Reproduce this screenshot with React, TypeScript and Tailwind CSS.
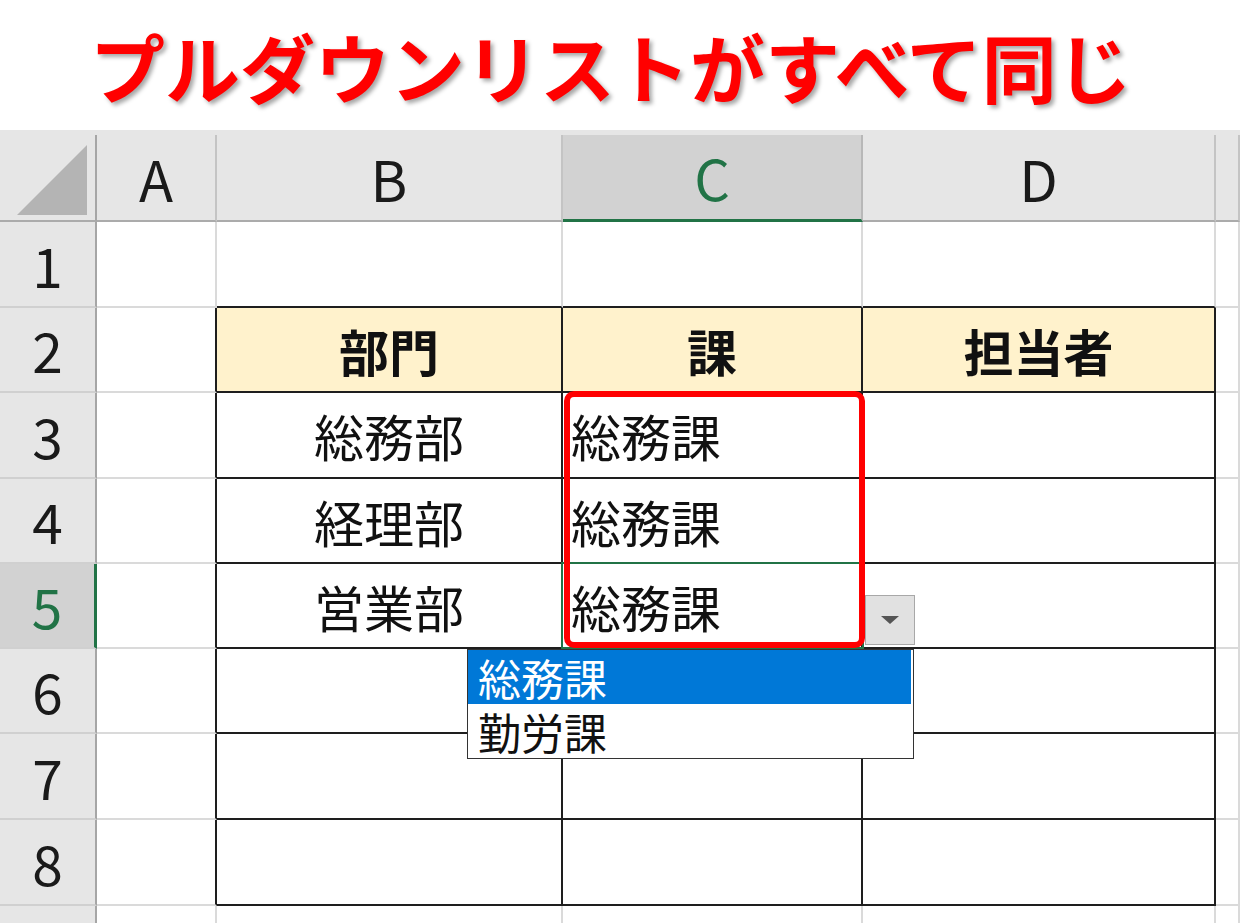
const colWidths = ['w-[120px]', 'w-[346px]', 'w-[300px]', 'w-[353px]', 'flex-1']
const colNames = ['A', 'B', 'C', 'D', 'E']
const rowHeights = ['h-[86px]', 'h-[85px]', 'h-[86px]', 'h-[85px]', 'h-[85px]', 'h-[85px]', 'h-[86px]', 'h-[86px]', 'h-[40px]']

type Cell = { text: string; bold?: boolean; align: 'center' | 'left' }

const data: Record<string, Cell> = {
  '2B': { text: '部門', bold: true, align: 'center' },
  '2C': { text: '課', bold: true, align: 'center' },
  '2D': { text: '担当者', bold: true, align: 'center' },
  '3B': { text: '総務部', align: 'center' },
  '3C': { text: '総務課', align: 'left' },
  '4B': { text: '経理部', align: 'center' },
  '4C': { text: '総務課', align: 'left' },
  '5B': { text: '営業部', align: 'center' },
  '5C': { text: '総務課', align: 'left' },
}

function cellClass(row: number, col: number) {
  const inTable = col >= 1 && col <= 3
  const rightBlack = row >= 2 && row <= 8 && col <= 3
  const bottomBlack = inTable && row >= 1 && row <= 8
  return [
    'border-r-2 border-b-2 flex items-center',
    rightBlack ? 'border-r-[#1e1e1e]' : 'border-r-[#dadada]',
    bottomBlack ? 'border-b-[#1e1e1e]' : 'border-b-[#dadada]',
    row === 2 && inTable ? 'bg-[#fff2cc]' : 'bg-white',
  ].join(' ')
}

function HeaderRow() {
  return (
    <div className="flex h-[92px] bg-[#e6e6e6]">
      <div className="w-[97px] mt-[5px] border-r-2 border-r-[#a6a6a6] border-b-2 border-b-[#ababab] flex items-end justify-end pr-[8px] pb-[5px]">
        <svg width="70" height="70" viewBox="0 0 70 70">
          <polygon points="0,70 70,0 70,70" fill="#b4b4b4" />
        </svg>
      </div>
      {colNames.map((name, i) => {
        const selected = name === 'C'
        return (
          <div
            key={name}
            className={`${colWidths[i]} mt-[5px] flex items-center justify-center text-[56px] leading-none ${
              selected
                ? 'bg-[#d2d2d2] border-r-2 border-r-[#b8b8b8] border-b-[3px] border-b-[#217346] text-[#217346]'
                : 'border-r-2 border-r-[#c4c4c4] border-b-2 border-b-[#ababab] text-[#1a1a1a]'
            }`}
          >
            {name !== 'E' && name}
          </div>
        )
      })}
    </div>
  )
}

function BodyRow({ row }: { row: number }) {
  const selected = row === 5
  return (
    <div className={`flex ${rowHeights[row - 1]}`}>
      <div
        className={`w-[97px] flex items-center justify-center text-[55px] leading-none border-b-2 border-b-[#d0d0d0] ${
          selected
            ? 'bg-[#d2d2d2] border-r-[3px] border-r-[#217346] text-[#217346]'
            : 'bg-[#e6e6e6] border-r-2 border-r-[#a6a6a6] text-[#1a1a1a]'
        }`}
      >
        {row < 9 && row}
      </div>
      {colNames.map((name, i) => {
        const cell = data[`${row}${name}`]
        return (
          <div key={name} className={`${colWidths[i]} ${cellClass(row, i)}`}>
            {cell && (
              <span
                className={`w-full text-[50px] leading-none text-[#111] ${
                  cell.bold ? 'font-bold' : 'font-normal'
                } ${cell.align === 'center' ? 'text-center' : 'text-left pl-[8px]'}`}
              >
                {cell.text}
              </span>
            )}
          </div>
        )
      })}
    </div>
  )
}

export default function App() {
  return (
    <div className="relative w-[1240px] h-[923px] overflow-hidden bg-white font-['Noto_Sans_CJK_JP',sans-serif]">
      <div className="h-[130px] flex items-center justify-center pr-[18px]">
        <h1 className="text-[75px] font-bold leading-none text-[#ff0000] [text-shadow:3px_3px_4px_rgba(0,0,0,0.35)]">
          プルダウンリストがすべて同じ
        </h1>
      </div>

      <HeaderRow />
      {[1, 2, 3, 4, 5, 6, 7, 8, 9].map((r) => (
        <BodyRow key={r} row={r} />
      ))}

      {/* active cell C5 */}
      <div className="absolute left-[561px] top-[562px] w-[303px] h-[87px] border-2 border-[#217346]" />

      {/* red highlight */}
      <div className="absolute left-[564px] top-[391px] w-[301px] h-[257px] border-[6px] border-[#ff0000] rounded-[10px]" />

      {/* dropdown button */}
      <div className="absolute left-[865px] top-[595px] w-[50px] h-[50px] bg-[#e1e1e1] border border-[#a8a8a8] flex items-center justify-center">
        <svg width="18" height="8" viewBox="0 0 18 8">
          <polygon points="0,0 18,0 9,8" fill="#555555" />
        </svg>
      </div>

      {/* dropdown list */}
      <div className="absolute left-[467px] top-[649px] w-[447px] h-[110px] bg-white border border-[#333] pr-[2px] text-[43px] leading-none">
        <div className="h-[54px] bg-[#0078d7] text-white flex items-center pl-[10px]">総務課</div>
        <div className="h-[54px] text-[#111] flex items-center pl-[10px]">勤労課</div>
      </div>
    </div>
  )
}
